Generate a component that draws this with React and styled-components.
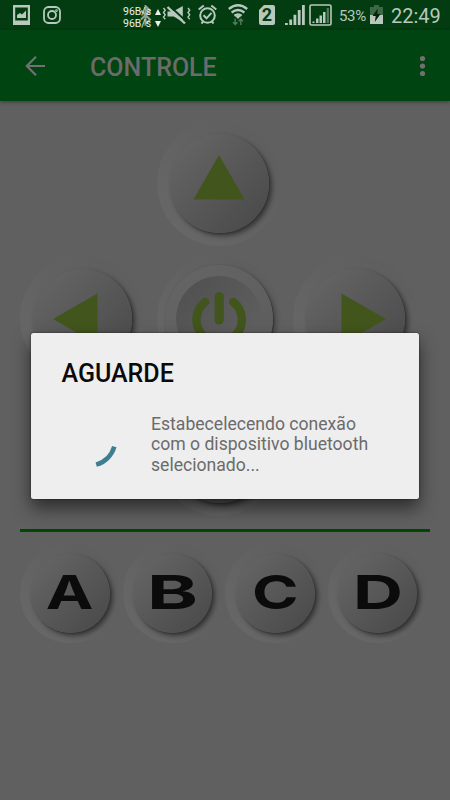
import React from 'react';
import styled, { createGlobalStyle, css } from 'styled-components';

const GlobalStyle = createGlobalStyle`
  * {
    box-sizing: border-box;
  }

  body {
    margin: 0;
    background: #606060;
    font-family: Roboto, "Liberation Sans", sans-serif;
  }
`;

const iconColor = '#b9c8bc';
const green = '#42551c';

const Screen = styled.div`
  width: 450px;
  height: 800px;
  overflow: hidden;
  background: #606060;
`;

/* status bar */

const StatusBar = styled.div`
  display: flex;
  align-items: flex-start;
  height: 30px;
  padding-left: 13px;
  background: #023c10;
  color: ${iconColor};
`;

const StatusItem = styled.div`
  flex: none;
  width: ${props => props.$width}px;
  height: 30px;
  margin-right: ${props => props.$after || 0}px;

  svg {
    display: block;
    overflow: visible;
  }
`;

const NetSpeed = styled.div`
  position: relative;
  flex: none;
  width: 38px;
  height: 30px;
  padding-top: 6px;
  color: #e9efea;
  font-size: 10.5px;
  line-height: 12px;
  white-space: nowrap;
`;

const NetLine = styled.div`
  position: relative;
  display: flex;
  align-items: center;
  justify-content: space-between;
`;

const Bluetooth = styled.svg`
  position: absolute;
  left: 17px;
  top: 5px;
`;

const Battery = styled.span`
  display: block;
  padding-top: 7px;
  font-size: 15px;
  line-height: 18px;
  letter-spacing: -0.35px;
  white-space: nowrap;
`;

const Clock = styled.span`
  display: block;
  padding-top: 5px;
  font-size: 20px;
  line-height: 23px;
  white-space: nowrap;
`;

/* toolbar */

const Toolbar = styled.header`
  position: relative;
  display: flex;
  align-items: center;
  height: 71px;
  padding: 0 22px 0 24px;
  background: #004412;
  box-shadow: 0 1px 4px rgba(0, 0, 0, 0.4);
`;

const ToolbarTitle = styled.h1`
  flex: 1;
  margin: 5px 0 0 43px;
  color: #6b6b6b;
  font-size: 25px;
  font-weight: 500;
  line-height: 30px;
`;

/* controls */

const Controls = styled.main`
  padding: 20px 20px 0;
`;

const Pad = styled.div`
  display: grid;
  grid-template-columns: repeat(3, 1fr);
  grid-auto-rows: 135px;
`;

const raised = css`
  background: linear-gradient(135deg, #646464 10%, #4b4b4b 90%);
  box-shadow: 1px 1px 1px #353535, 3px 3px 5px rgba(0, 0, 0, 0.45);
`;

const RoundButton = styled.button`
  display: flex;
  align-items: center;
  justify-content: center;
  width: ${props => props.$size}px;
  height: ${props => props.$size}px;
  padding: 0;
  border: 0;
  border-radius: 50%;
  background: linear-gradient(45deg, #676767 10%, #616161 60%, #5e5e5e 90%);
  grid-column: ${props => props.$column || 'auto'};
`;

const ButtonFace = styled.span`
  display: flex;
  align-items: center;
  justify-content: center;
  width: 79%;
  height: 79%;
  border-radius: 50%;
  ${raised};
`;

const PowerRing = styled.span`
  display: flex;
  align-items: center;
  justify-content: center;
  width: 108px;
  height: 108px;
  border-radius: 50%;
  background: linear-gradient(135deg, #656565, #5c5c5c);
  box-shadow: 1px 1px 1px #353535, 3px 3px 5px rgba(0, 0, 0, 0.3),
    0 0 1px #555;
`;

const PowerFace = styled.span`
  display: flex;
  align-items: center;
  justify-content: center;
  width: 86px;
  height: 86px;
  border-radius: 50%;
  background: linear-gradient(135deg, #4f4f4f, #636363);
`;

const Divider = styled.hr`
  height: 3px;
  margin: 3px 0 11px;
  border: 0;
  background: linear-gradient(#004600 80%, #2c522c);
`;

const LetterRow = styled.div`
  display: grid;
  grid-template-columns: repeat(4, 1fr);
`;

const Letter = styled.span`
  margin-top: -2px;
  color: #0b0b0b;
  font-family: Inter, "DejaVu Sans", sans-serif;
  font-size: 47px;
  font-weight: 700;
  line-height: 48px;
  transform: scaleX(${props => props.$stretch});
`;

/* dialog */

const Overlay = styled.div`
  position: absolute;
  top: 0;
  left: 0;
  width: 450px;
  height: 800px;
  padding: 332.5px 31px 0;
`;

const Dialog = styled.section`
  height: 166.5px;
  padding: 26px 30px 0;
  border-radius: 2.5px;
  background: #eee;
  box-shadow: 0 0 2px rgba(0, 0, 0, 0.6), 0 9px 18px rgba(0, 0, 0, 0.55);
`;

const DialogTitle = styled.h2`
  margin: 0 0 0 0.5px;
  color: #0a0a0a;
  font-size: 25px;
  font-weight: 500;
  line-height: 30px;
`;

const DialogBody = styled.div`
  display: flex;
  align-items: center;
  gap: 32px;
  margin-top: 25px;

  svg {
    margin-top: -3px;
  }
`;

const Message = styled.p`
  margin: 0;
  color: #6b6b6b;
  font-size: 17.6px;
  line-height: 20.7px;
  white-space: pre-line;
`;

const arrows = {
  up: '49,20 74.5,64.5 23.5,64.5',
  left: '19,49 63.5,23.5 63.5,74.5',
  right: '79,49 34.5,23.5 34.5,74.5',
  down: '49,78 74.5,33.5 23.5,33.5',
};

const ArrowButton = ({ direction, column }) => (
  <RoundButton $size={125} $column={column} aria-label={direction}>
    <ButtonFace>
      <svg width="98" height="98">
        <polygon points={arrows[direction]} fill={green} />
      </svg>
    </ButtonFace>
  </RoundButton>
);

const PowerButton = () => (
  <RoundButton $size={125} aria-label="power">
    <PowerRing>
      <PowerFace>
        <svg width="86" height="86" fill="none" stroke={green} strokeLinecap="round">
          <path d="M29 26A22.7 22.7 0 1 0 57.3 26" strokeWidth="8.5" />
          <path d="M43.2 20.5V44" strokeWidth="9.2" />
        </svg>
      </PowerFace>
    </PowerRing>
  </RoundButton>
);

const letters = [
  { name: 'A', stretch: 1.36 },
  { name: 'B', stretch: 1.64 },
  { name: 'C', stretch: 1.34 },
  { name: 'D', stretch: 1.47 },
];

const Status = () => (
  <StatusBar>
    <StatusItem $width={17} $after={13}>
      <svg width="17" height="30" fill={iconColor}>
        <path fillRule="evenodd" d="M0 5h17v20H0zM2.2 7.5v13h12.6v-13z" />
        <path d="M4 18v-3l3-2 2 1.5 4-4V18z" />
      </svg>
    </StatusItem>
    <StatusItem $width={18} $after={62}>
      <svg width="18" height="30" fill="none" stroke={iconColor} strokeWidth="1.8">
        <rect x="1" y="7" width="16" height="16" rx="4.5" />
        <circle cx="9" cy="15" r="4" />
        <circle cx="13.5" cy="10.6" r="0.5" />
      </svg>
    </StatusItem>
    <NetSpeed>
      <Bluetooth width="12" height="21" fill="none" stroke="#91a596" strokeWidth="2">
        <path d="M1 5.5l9 9-4.5 4.5V1L10 5.5l-9 9" />
      </Bluetooth>
      <NetLine>
        96B/s
        <svg width="6" height="6" fill="#e9efea">
          <path d="M3 0l3 6H0z" />
        </svg>
      </NetLine>
      <NetLine>
        96B/s
        <svg width="6" height="6" fill="#e9efea">
          <path d="M0 0h6L3 6z" />
        </svg>
      </NetLine>
    </NetSpeed>
    <StatusItem $width={30} $after={7}>
      <svg width="30" height="30" fill="none" stroke={iconColor}>
        <path d="M2.5 8l1.7 2.2-1.7 2.3 1.7 2.3-1.7 2.3 1.7 2.2M27 8l1.7 2.2-1.7 2.3 1.7 2.3-1.7 2.3 1.7 2.2" strokeWidth="1.4" />
        <path d="M6.5 11.5h5.5l9.8-5.5V22l-9-5.5H6.5z" fill={iconColor} stroke="none" />
        <path d="M8 5.5L25 21" stroke="#023c10" strokeWidth="2" />
        <path d="M6.5 7L24 23.5" strokeWidth="2.4" />
      </svg>
    </StatusItem>
    <StatusItem $width={19} $after={11}>
      <svg width="19" height="30" fill="none" stroke={iconColor} strokeWidth="2">
        <circle cx="9.5" cy="15.5" r="7.3" />
        <path d="M0.7 9.5l5-4M13.3 5.5l5 4M3.5 23.5l2-2.3M15.5 23.5l-2-2.3M5.5 15.3l3 3 5-5.5" />
      </svg>
    </StatusItem>
    <StatusItem $width={20} $after={11}>
      <svg width="20" height="30" fill="none" stroke={iconColor} strokeWidth="2.3">
        <path d="M0.8 9q9.2-7.6 18.4 0M3.6 12.5q6.4-5 12.8 0M6.4 15.8q3.6-2.6 7.2 0" />
        <path d="M7.5 16.3q2.5-1.7 5 0L10 19z" fill={iconColor} stroke="none" />
        <path d="M7.2 18.5v6M5 22.2l2.2 2.3 2.2-2.3M12.8 25v-6M10.6 21.3L12.8 19l2.2 2.3" stroke="#547c5c" strokeWidth="1.4" />
      </svg>
    </StatusItem>
    <StatusItem $width={16} $after={10}>
      <svg width="16" height="30">
        <path d="M5 5h9q2 0 2 2v16q0 2-2 2H2q-2 0-2-2V10z" fill={iconColor} />
        <text x="8" y="21.3" fill="#023c10" fontSize="18" fontWeight="700" textAnchor="middle">2</text>
      </svg>
    </StatusItem>
    <StatusItem $width={20} $after={4}>
      <svg width="20" height="30" fill={iconColor}>
        <path d="M0 23h2.8v2H0zM4.3 19.5h2.8V25H4.3zM8.5 14.8h2.8V25H8.5zM12.8 10h2.8v15h-2.8zM17 5h2.8v20H17z" />
      </svg>
    </StatusItem>
    <StatusItem $width={23} $after={7}>
      <svg width="23" height="30" fill={iconColor}>
        <rect x="1" y="5" width="21" height="20" rx="1.5" fill="none" stroke={iconColor} strokeWidth="1.6" />
        <path d="M3.5 21.5h2V23h-2zM7 18.5h2.5V23H7zM10.5 15.5H13V23h-2.5zM14 12h2.5v11H14z" />
        <path d="M17.7 8h2.2v15h-2.2z" fill="#547c5c" />
      </svg>
    </StatusItem>
    <StatusItem $width={26} $after={5}>
      <Battery>53%</Battery>
    </StatusItem>
    <StatusItem $width={13} $after={8}>
      <svg width="13" height="30">
        <path d="M4 5h5v2h4v8H0V7h4z" fill="#3d6847" />
        <path d="M0 15h13v9H0z" fill={iconColor} />
        <path d="M7.8 8.5L2.5 16h3.2L4.8 22l5.7-8H7.3z" fill="#022409" />
      </svg>
    </StatusItem>
    <Clock>22:49</Clock>
  </StatusBar>
);

export default function App() {
  return (
    <Screen>
      <GlobalStyle />
      <Status />
      <Toolbar>
        <svg width="23" height="24" fill="none" stroke="#717171" strokeWidth="2.2">
          <path d="M21 12H3M12 2.8L2.8 12l9.2 9.2" />
        </svg>
        <ToolbarTitle>CONTROLE</ToolbarTitle>
        <svg width="11" height="24" fill="#707070">
          <circle cx="5.5" cy="4.5" r="2.6" />
          <circle cx="5.5" cy="12" r="2.6" />
          <circle cx="5.5" cy="19.5" r="2.6" />
        </svg>
      </Toolbar>

      <Controls>
        <Pad>
          <ArrowButton direction="up" column={2} />
          <ArrowButton direction="left" column={1} />
          <PowerButton />
          <ArrowButton direction="right" />
          <ArrowButton direction="down" column={2} />
        </Pad>
        <Divider />
        <LetterRow>
          {letters.map(letter => (
            <RoundButton $size={100} key={letter.name}>
              <ButtonFace>
                <Letter $stretch={letter.stretch}>{letter.name}</Letter>
              </ButtonFace>
            </RoundButton>
          ))}
        </LetterRow>
      </Controls>

      <Overlay>
        <Dialog role="dialog">
          <DialogTitle>AGUARDE</DialogTitle>
          <DialogBody>
            <svg width="58" height="58" fill="none" stroke="#3d7f90" strokeWidth="4.6">
              <path d="M53.3 32.7A26 26 0 0 1 35.2 50.6" />
            </svg>
            <Message>
              {'Estabecelecendo conexão\ncom o dispositivo bluetooth\nselecionado...'}
            </Message>
          </DialogBody>
        </Dialog>
      </Overlay>
    </Screen>
  );
}
